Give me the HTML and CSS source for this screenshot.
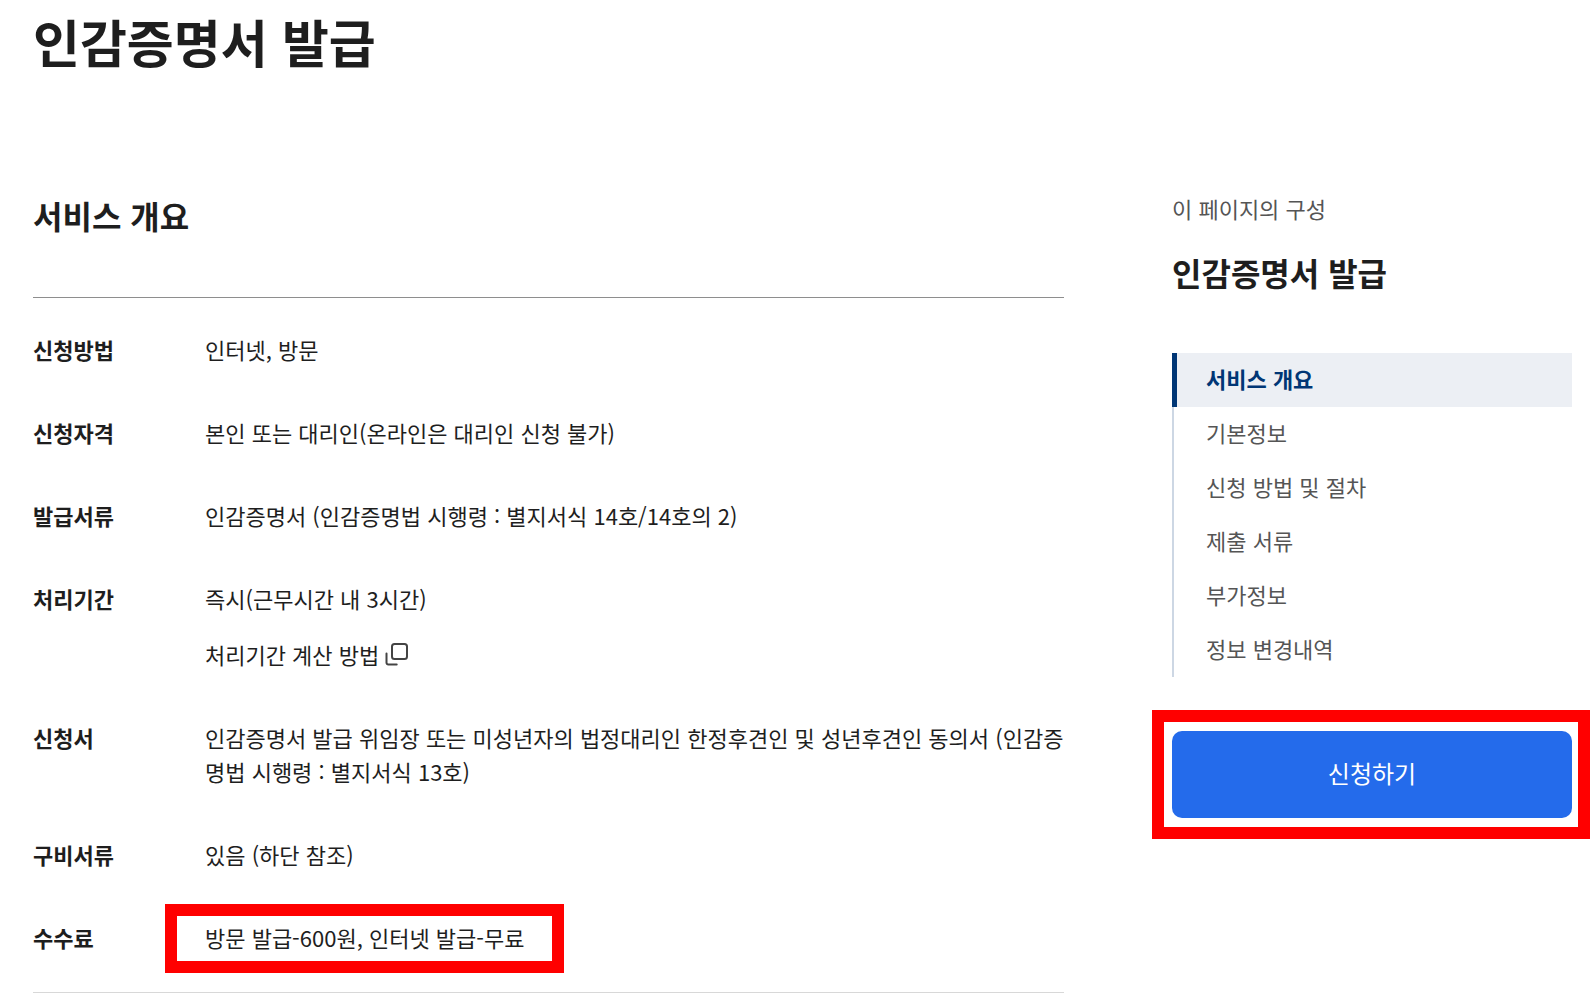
FILE: index.html
```html
<!DOCTYPE html>
<html lang="ko">
<head>
<meta charset="utf-8">
<meta name="viewport" content="width=device-width, initial-scale=1">
<title>인감증명서 발급</title>
<link rel="stylesheet" href="styles.css">
</head>
<body>
<div class="page">
  <h1 class="page-title">인감증명서 발급</h1>
  <div class="columns">
    <main class="content">
      <h2 class="section-title">서비스 개요</h2>
      <dl class="summary">
        <div class="row"><dt>신청방법</dt><dd>인터넷, 방문</dd></div>
        <div class="row"><dt>신청자격</dt><dd>본인 또는 대리인(온라인은 대리인 신청 불가)</dd></div>
        <div class="row"><dt>발급서류</dt><dd>인감증명서 (인감증명법 시행령 : 별지서식 14호/14호의 2)</dd></div>
        <div class="row">
          <dt>처리기간</dt>
          <dd class="stack">
            <span>즉시(근무시간 내 3시간)</span>
            <a class="popup-link" href="#">처리기간 계산 방법
              <svg class="popup-icon" viewBox="0 0 24 24" aria-hidden="true"><rect x="7" y="2" width="15" height="15" rx="2.5"/><path d="M1.5 11.5v9.2a1.8 1.8 0 0 0 1.8 1.8h8.4"/></svg>
            </a>
          </dd>
        </div>
        <div class="row"><dt>신청서</dt><dd>인감증명서 발급 위임장 또는 미성년자의 법정대리인 한정후견인 및 성년후견인 동의서 (인감증명법 시행령 : 별지서식 13호)</dd></div>
        <div class="row"><dt>구비서류</dt><dd>있음 (하단 참조)</dd></div>
        <div class="row"><dt>수수료</dt><dd><span class="marked marked-text">방문 발급-600원, 인터넷 발급-무료</span></dd></div>
      </dl>
    </main>
    <aside class="side">
      <p class="side-label">이 페이지의 구성</p>
      <p class="side-title">인감증명서 발급</p>
      <nav aria-label="이 페이지의 구성">
        <ul class="toc">
          <li><a class="toc-link active" href="#" aria-current="true">서비스 개요</a></li>
          <li><a class="toc-link" href="#">기본정보</a></li>
          <li><a class="toc-link" href="#">신청 방법 및 절차</a></li>
          <li><a class="toc-link" href="#">제출 서류</a></li>
          <li><a class="toc-link" href="#">부가정보</a></li>
          <li><a class="toc-link" href="#">정보 변경내역</a></li>
        </ul>
      </nav>
      <div class="marked marked-button"><button class="apply" type="button">신청하기</button></div>
    </aside>
  </div>
</div>
</body>
</html>
```
FILE: styles.css
```css
* {
  box-sizing: border-box;
}

body {
  margin: 0;
  background: #fff;
  color: #1e1e1e;
  font-family: "Noto Sans CJK KR", sans-serif;
  font-size: 22px;
  line-height: 34px;
}

h1, h2, p, dl, dd, ul {
  margin: 0;
  padding: 0;
}

a {
  color: inherit;
  text-decoration: none;
}

.page {
  padding: 3px 18px 0 33px;
}

.page-title {
  font-size: 51px;
  line-height: 76px;
  font-weight: 700;
}

.columns {
  display: flex;
  align-items: flex-start;
  gap: 108px;
  padding-top: 112px;
}

.content {
  flex: 1;
  min-width: 0;
}

.section-title {
  padding-bottom: 58px;
  font-size: 32px;
  line-height: 48px;
  font-weight: 700;
}

.summary {
  display: flex;
  flex-direction: column;
  gap: 49px;
  padding: 34px 0 38px;
  border-top: 1px solid #8e8e8e;
  border-bottom: 1px solid #d8d8d8;
}

.row {
  display: grid;
  grid-template-columns: 172px 1fr;
}

.row dt {
  font-weight: 700;
}

.row dd {
  word-break: break-all;
}

.stack {
  display: flex;
  flex-direction: column;
  align-items: flex-start;
  gap: 22px;
}

.popup-link {
  display: flex;
  align-items: center;
  gap: 6px;
}

.popup-icon {
  width: 24px;
  height: 24px;
  fill: none;
  stroke: #444;
  stroke-width: 2;
  stroke-linecap: round;
}

.side {
  width: 400px;
  flex: none;
}

.side-label {
  color: #555;
}

.side-title {
  margin: 23px 0 57px;
  font-size: 32px;
  line-height: 48px;
  font-weight: 700;
}

.toc {
  list-style: none;
  background: linear-gradient(#cdd7e4, #cdd7e4) left / 2px 100% no-repeat;
}

.toc-link {
  display: block;
  padding: 8px 0 12px 34px;
  color: #555;
}

.toc-link.active {
  padding-left: 29px;
  border-left: 5px solid #003675;
  background: #eceff4;
  color: #003675;
  font-weight: 700;
}

.marked {
  position: relative;
}

/* Red highlight frame drawn around the marked item */
.marked::after {
  content: "";
  position: absolute;
  border: 12px solid #f00;
  pointer-events: none;
}

.marked-text::after {
  inset: -17px -40px -20px -40px;
}

.marked-button {
  margin-top: 54px;
}

.marked-button::after {
  inset: -21px -18px -21px -20px;
}

.apply {
  display: block;
  width: 100%;
  padding: 23px 24px 27px;
  border: 0;
  border-radius: 10px;
  background: #246beb;
  color: #fff;
  font: inherit;
  font-size: 24px;
  line-height: 37px;
}
```
